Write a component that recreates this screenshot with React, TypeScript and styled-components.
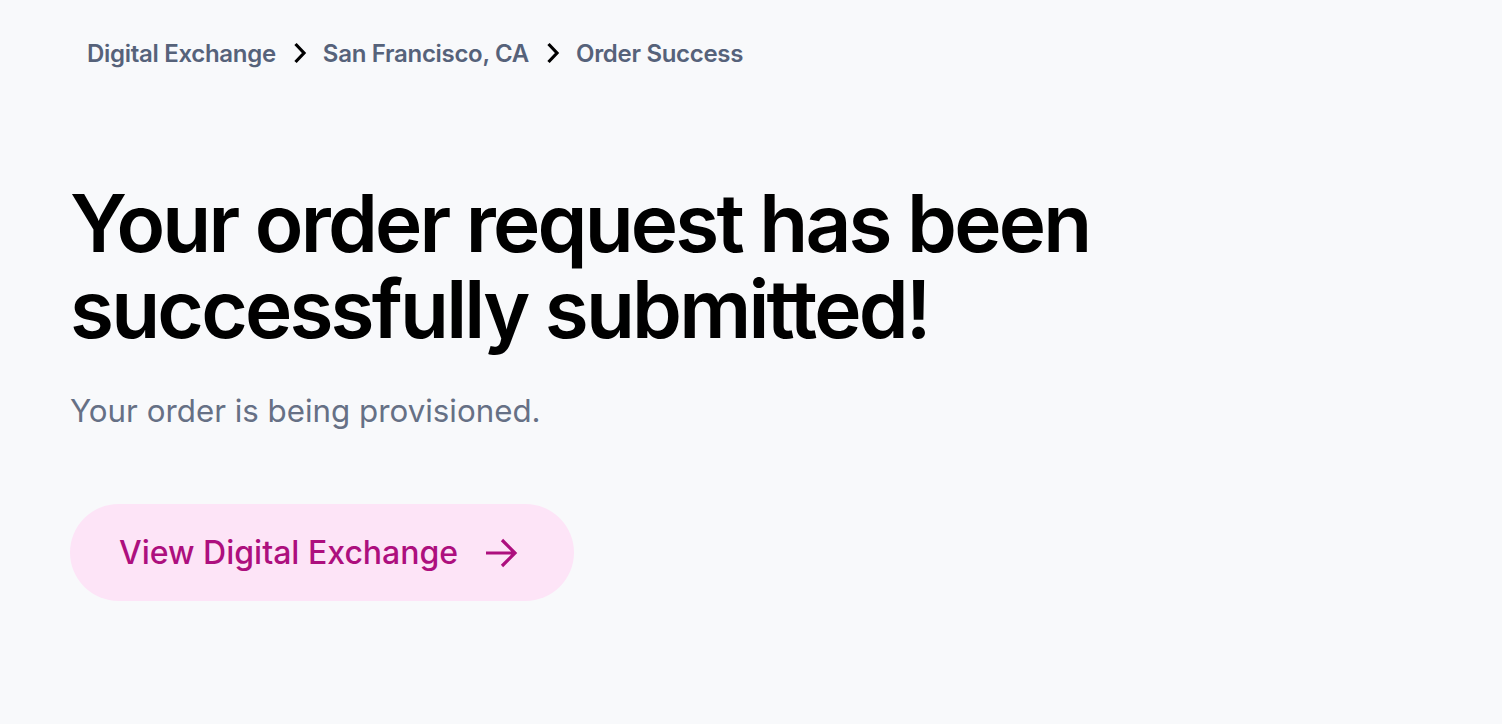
import styled, { createGlobalStyle } from 'styled-components';

const GlobalStyle = createGlobalStyle`
	html, body {
		margin: 0;
		padding: 0;
		background: #f8f9fb;
		font-family: Inter, "Noto Sans", sans-serif;
	}
`;

const crumbs = ['Digital Exchange', 'San Francisco, CA', 'Order Success'];

const ChevronIcon = () => (
	<svg width="16" height="24" viewBox="0 0 16 24" fill="none">
		<path d="M3.5 3L12 12l-8.5 9" stroke="#000" strokeWidth="3.2" strokeLinecap="butt" strokeLinejoin="miter" />
	</svg>
);

const ArrowIcon = () => (
	<svg width="36" height="36" viewBox="0 0 36 36" fill="none">
		<path d="M2 18h30M18 5l13 13-13 13" stroke="currentColor" strokeWidth="3.2" strokeLinecap="butt" />
	</svg>
);

const App = () => {
	return (
		<>
			<GlobalStyle />
			<Page>
				<Breadcrumbs>
					{crumbs.map((c, i) => (
						<Crumb key={c}>
							{c}
							{i < crumbs.length - 1 && (
								<Separator>
									<ChevronIcon />
								</Separator>
							)}
						</Crumb>
					))}
				</Breadcrumbs>

				<Content>
					<Title>
						Your order request has been
						<br />
						successfully submitted!
					</Title>
					<Subtitle>Your order is being provisioned.</Subtitle>
					<ViewButton type="button">
						View Digital Exchange
						<ArrowIcon />
					</ViewButton>
				</Content>
			</Page>
		</>
	);
};

const Page = styled.div`
	min-height: 724px;
	padding: 36px 0 0 0;
	box-sizing: border-box;
`;

const Breadcrumbs = styled.nav`
	display: flex;
	align-items: center;
	padding-left: 87px;
	height: 34px;
`;

const Crumb = styled.span`
	display: flex;
	align-items: center;
	font-size: 24px;
	font-weight: 600;
	color: #56627a;
	letter-spacing: -0.3px;
`;

const Separator = styled.span`
	display: flex;
	align-items: center;
	margin: 0 15px 0 16px;
`;

const Content = styled.main`
	padding: 110px 0 0 70px;
	display: flex;
	flex-direction: column;
	align-items: flex-start;
`;

const Title = styled.h1`
	margin: 0;
	font-size: 80px;
	line-height: 86px;
	font-weight: 600;
	color: #000;
	letter-spacing: -2.8px;
`;

const Subtitle = styled.p`
	margin: 39px 0 0 0;
	font-size: 31.3px;
	line-height: 40px;
	font-weight: 400;
	color: #667085;
`;

const ViewButton = styled.button`
	margin-top: 73px;
	height: 97px;
	padding: 0 54px 0 49px;
	border: none;
	border-radius: 999px;
	background: #fde4f7;
	color: #ad0f7e;
	font-family: inherit;
	font-size: 32px;
	font-weight: 500;
	display: flex;
	align-items: center;
	gap: 26px;
	cursor: pointer;
`;

export default App;
